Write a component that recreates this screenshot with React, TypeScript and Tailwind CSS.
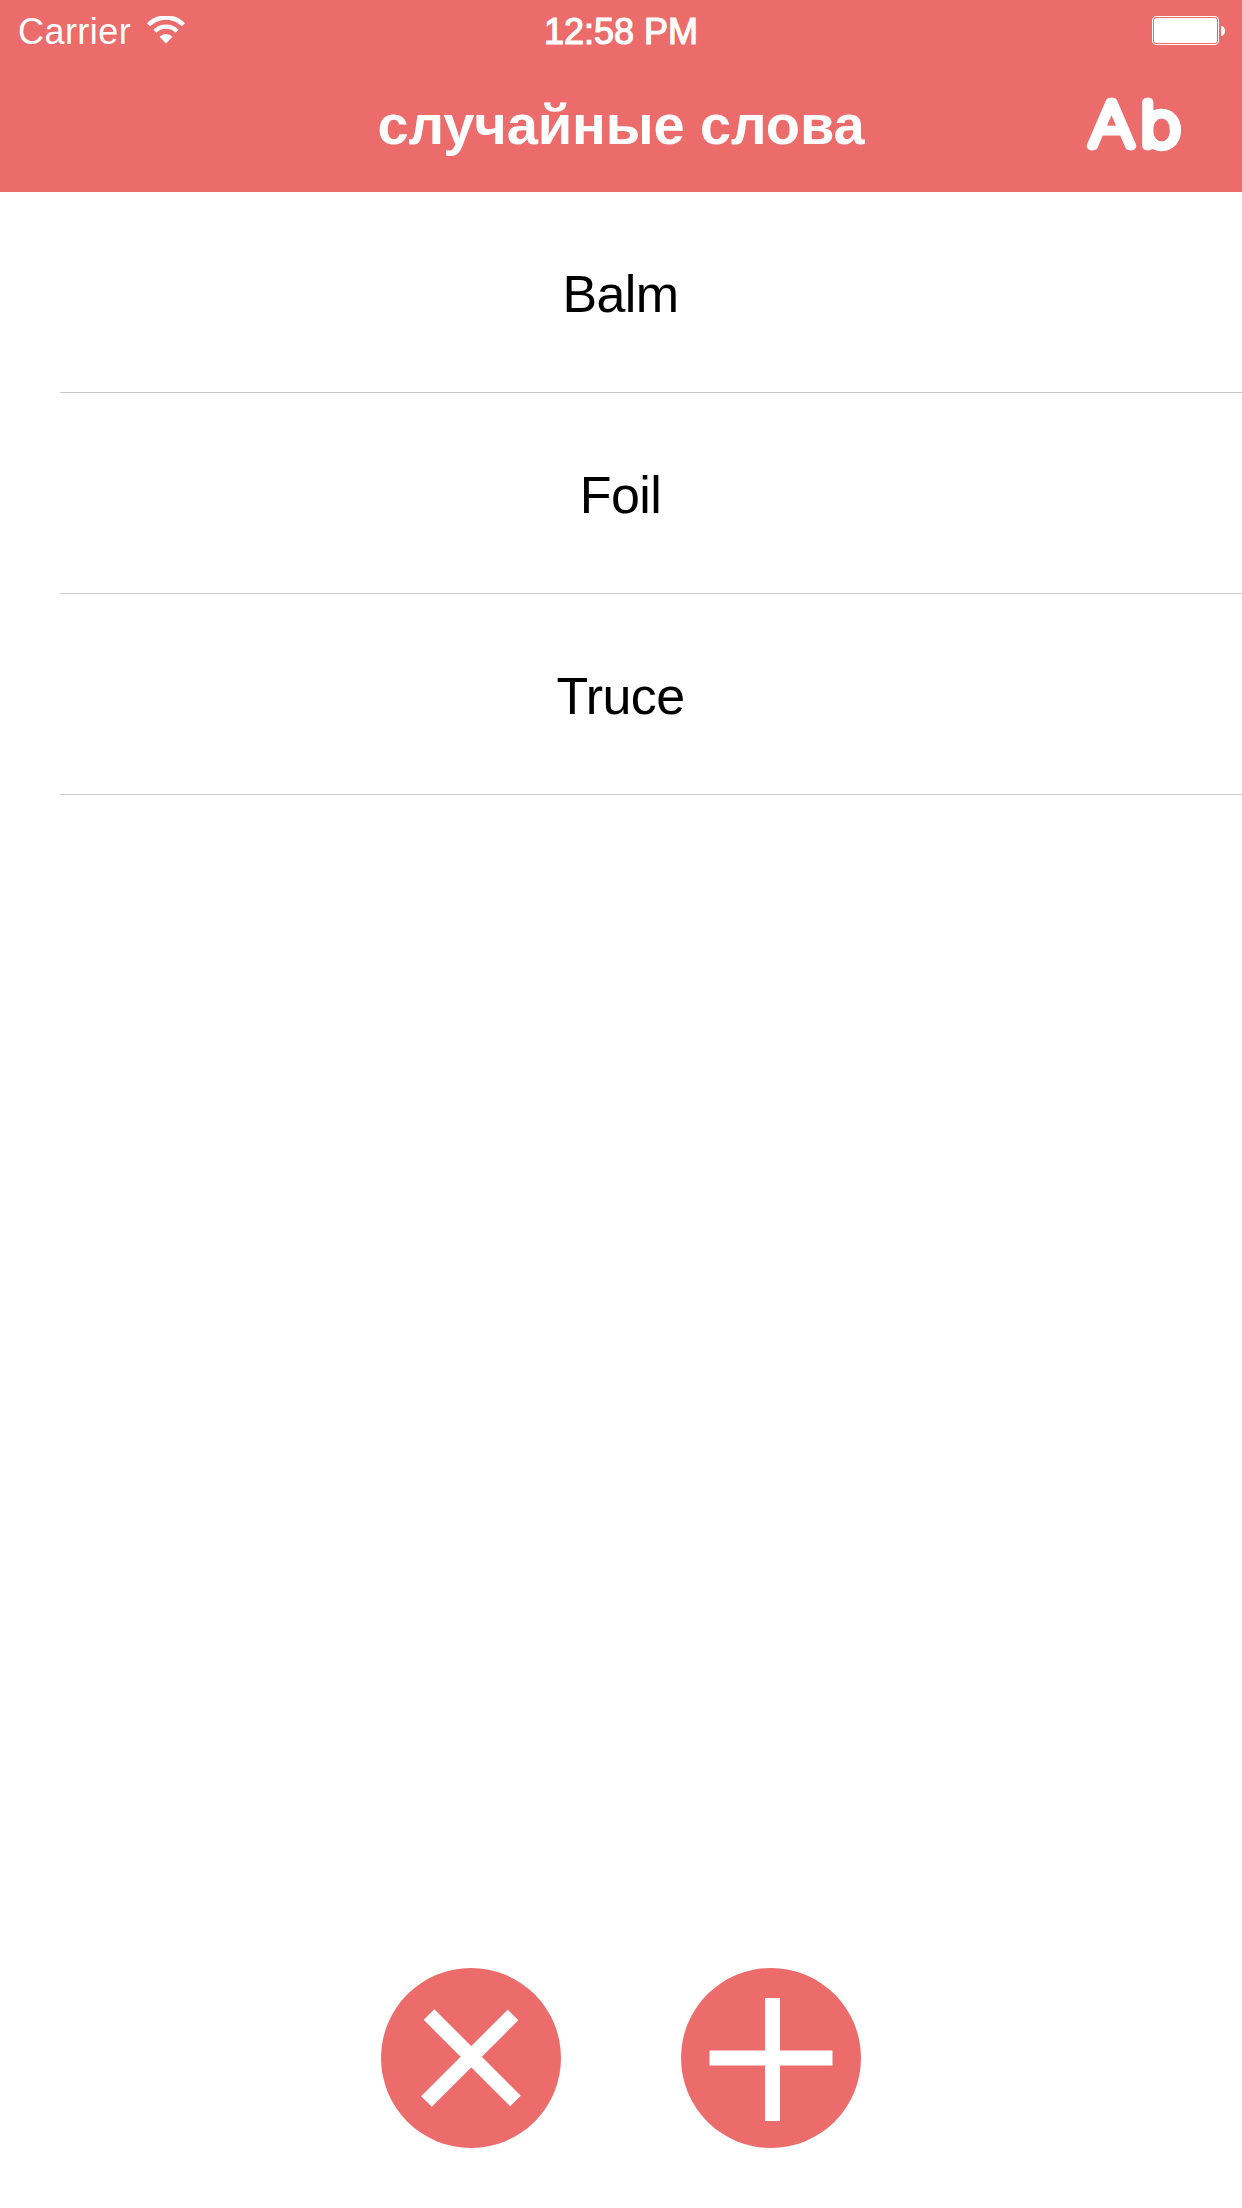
import React from "react";

const words = ["Balm", "Foil", "Truce"];

function WifiIcon() {
  return (
    <svg className="ml-4 h-[28px] w-[38px]" viewBox="0 0 38 28" fill="none">
      <path d="M1.6 8.700a24.6 24.6 0 0 1 34.8 0" stroke="#fff" strokeWidth="4.4" />
      <path d="M7.9 15.2a15.7 15.7 0 0 1 22.2 0" stroke="#fff" strokeWidth="4.4" />
      <path d="M19 27.5 12.5 20.7a9.200 9.200 0 0 1 13 0Z" fill="#fff" />
    </svg>
  );
}

function BatteryIcon() {
  return (
    <svg className="h-[29px] w-[73px]" viewBox="0 0 73 29" fill="none">
      <rect x="0.5" y="0.5" width="66" height="28" rx="3.5" stroke="#fff" />
      <rect x="2" y="2" width="63" height="25" rx="2.5" fill="#fff" />
      <path d="M69 10c2.600 0 4 2.500 4 5s-1.400 5-4 5Z" fill="#fff" />
    </svg>
  );
}

export default function App() {
  return (
    <div className="flex h-[2208px] w-[1242px] flex-col bg-white font-['Liberation_Sans',sans-serif]">
      <header className="flex h-[192px] flex-col bg-[#eb6c6a] text-white">
        <div className="grid h-[60px] grid-cols-3 items-center pr-[17px] pl-[18px]">
          <div className="flex items-center">
            <span className="pt-[3px] text-[36px] leading-[57px] tracking-[0.45px]">Carrier</span>
            <WifiIcon />
          </div>
          <span className="pt-[3px] pr-[1px] text-center text-[36px] leading-[57px] [-webkit-text-stroke:1.200px_#fff]">
            12:58 PM
          </span>
          <div className="flex justify-end">
            <BatteryIcon />
          </div>
        </div>
        <div className="grid h-[132px] grid-cols-[1fr_auto_1fr] items-center">
          <h1 className="col-start-2 pb-[3px] text-[56px] leading-[129px] font-bold tracking-[-0.1px]">
            случайные слова
          </h1>
          <svg className="mr-[56px] h-[110px] w-[104px] justify-self-end" viewBox="0 0 104 110">
            <text
              x="6.4 50.7"
              y="75.3"
              transform="scale(1.15 1)"
              fontFamily="Inter, sans-serif"
              fontSize="60.5"
              fontWeight="100"
              fill="#fff"
              stroke="#fff"
              strokeWidth="8.3"
              strokeLinejoin="round"
            >
              Ab
            </text>
          </svg>
        </div>
      </header>
      <ul>
        {words.map((word) => (
          <li key={word} className="flex h-[201px] flex-col pl-[60px]">
            <div className="flex flex-1 items-center justify-center border-b border-[#c8c7cc] pt-[3px] pr-[61px] text-[52px] leading-[60px] tracking-[-0.6px] text-black">
              {word}
            </div>
          </li>
        ))}
      </ul>
      <footer className="mt-auto flex justify-center gap-[120px] pb-[60px]">
        <button aria-label="Clear" className="size-[180px] rounded-full bg-[#eb6c6a]">
          <svg viewBox="0 0 180 180" className="size-full" stroke="#fff" strokeWidth="15">
            <path d="M48 46.500 134.500 133M132 47 45.500 133.500" />
          </svg>
        </button>
        <button aria-label="Add" className="size-[180px] rounded-full bg-[#eb6c6a]">
          <svg viewBox="0 0 180 180" className="size-full" stroke="#fff" strokeWidth="15">
            <path d="M91.500 30V153M28.500 90H151.500" />
          </svg>
        </button>
      </footer>
    </div>
  );
}
